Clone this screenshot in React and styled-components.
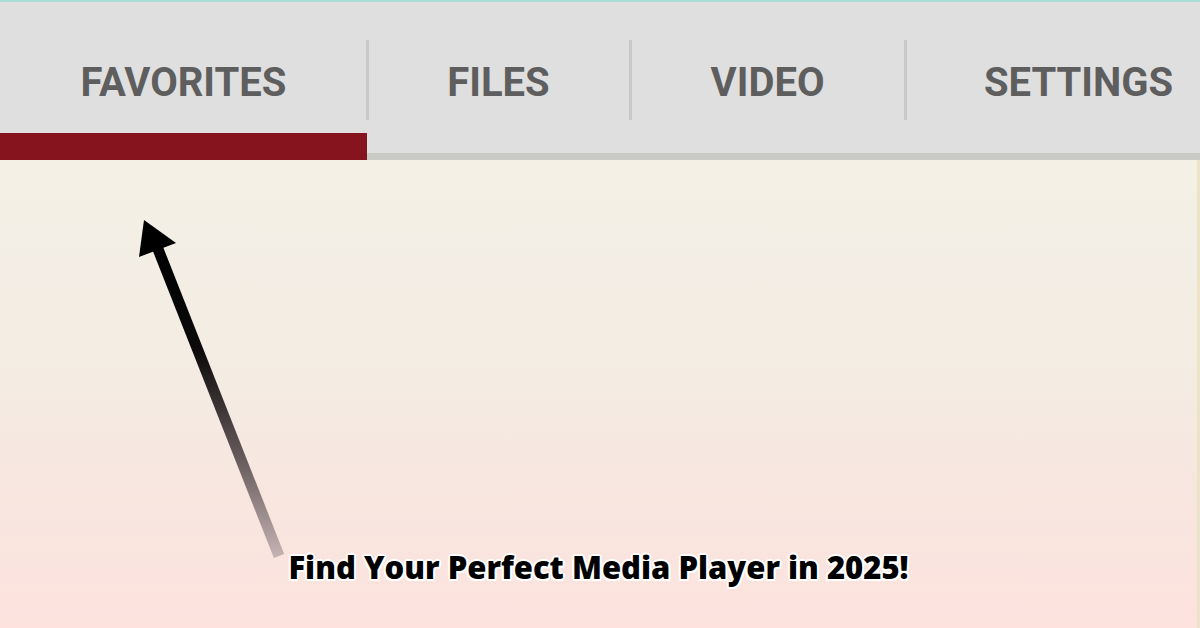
import React from 'react';
import styled, { createGlobalStyle } from 'styled-components';

const GlobalStyle = createGlobalStyle`
  html, body {
    margin: 0;
    padding: 0;
    width: 1200px;
    height: 628px;
    overflow: hidden;
    background: #f3efe5;
  }
`;

function App() {
  const tabs = [
    { label: 'FAVORITES', width: 367, active: true },
    { label: 'FILES', width: 263 },
    { label: 'VIDEO', width: 275 },
    { label: 'SETTINGS', width: 295, shift: 52 },
  ];

  return (
    <Page>
      <GlobalStyle />
      <TopLine />
      <TabBar>
        {tabs.map((tab, index) => (
          <Tab key={tab.label} $width={tab.width} $active={tab.active} $divider={index > 0}>
            <TabLabel $shift={tab.shift || 0}>{tab.label}</TabLabel>
          </Tab>
        ))}
      </TabBar>
      <Content>
        <Arrow viewBox="0 0 1200 466" width="1200" height="466">
          <defs>
            <linearGradient id="shaft" gradientUnits="userSpaceOnUse" x1="0" y1="80" x2="0" y2="398">
              <stop offset="0" stopColor="#000" />
              <stop offset="0.35" stopColor="#0c0a0a" />
              <stop offset="0.7" stopColor="#6a5e5f" />
              <stop offset="1" stopColor="#c6b4b4" />
            </linearGradient>
          </defs>
          <line x1="156" y1="84" x2="279" y2="396" stroke="url(#shaft)" strokeWidth="11" />
          <polygon points="144,60 139,97 176,83" fill="#000" />
        </Arrow>
        <Caption>Find Your Perfect Media Player in 2025!</Caption>
      </Content>
    </Page>
  );
}

// Styled components
const Page = styled.div`
  width: 1200px;
  height: 628px;
  display: flex;
  flex-direction: column;
  overflow: hidden;
`;

const TopLine = styled.div`
  height: 2px;
  background: #a9ddd6;
`;

const TabBar = styled.div`
  display: flex;
  height: 158px;
  background: #dfdfdf;
`;

const Tab = styled.div`
  position: relative;
  box-sizing: border-box;
  width: ${(p) => p.$width}px;
  height: 158px;
  display: flex;
  justify-content: center;
  align-items: flex-start;
  padding-top: 61px;
  border-bottom: ${(p) => (p.$active ? '27px solid #85141e' : '7px solid #c9c9c6')};

  &::before {
    content: '';
    display: ${(p) => (p.$divider ? 'block' : 'none')};
    position: absolute;
    left: -1px;
    top: 38px;
    width: 3px;
    height: 80px;
    background: #c9c9c9;
  }
`;

const TabLabel = styled.span`
  font-family: Roboto, "Liberation Sans", sans-serif;
  font-weight: 700;
  font-size: 40px;
  line-height: 40px;
  color: #5e5e5e;
  margin-left: ${(p) => p.$shift}px;
`;

const Content = styled.div`
  position: relative;
  flex: 1;
  display: flex;
  flex-direction: column;
  justify-content: flex-end;
  align-items: center;
  padding-bottom: 40px;
  background: linear-gradient(180deg, #f4f0e6 0%, #f3ede4 40%, #f7e6df 70%, #fde2de 100%);
  border-right: 3px solid #ece3c9;
`;

const Arrow = styled.svg`
  position: absolute;
  left: 0;
  top: 0;
`;

const Caption = styled.div`
  position: relative;
  font-family: "Open Sans", Lato, sans-serif;
  font-weight: 800;
  font-size: 31px;
  color: #000;
  letter-spacing: 0px;
  text-shadow:
    2px 0 0 #fff, -2px 0 0 #fff, 0 2px 0 #fff, 0 -2px 0 #fff,
    1.5px 1.5px 0 #fff, -1.5px 1.5px 0 #fff, 1.5px -1.5px 0 #fff, -1.5px -1.5px 0 #fff;
`;

export default App;
